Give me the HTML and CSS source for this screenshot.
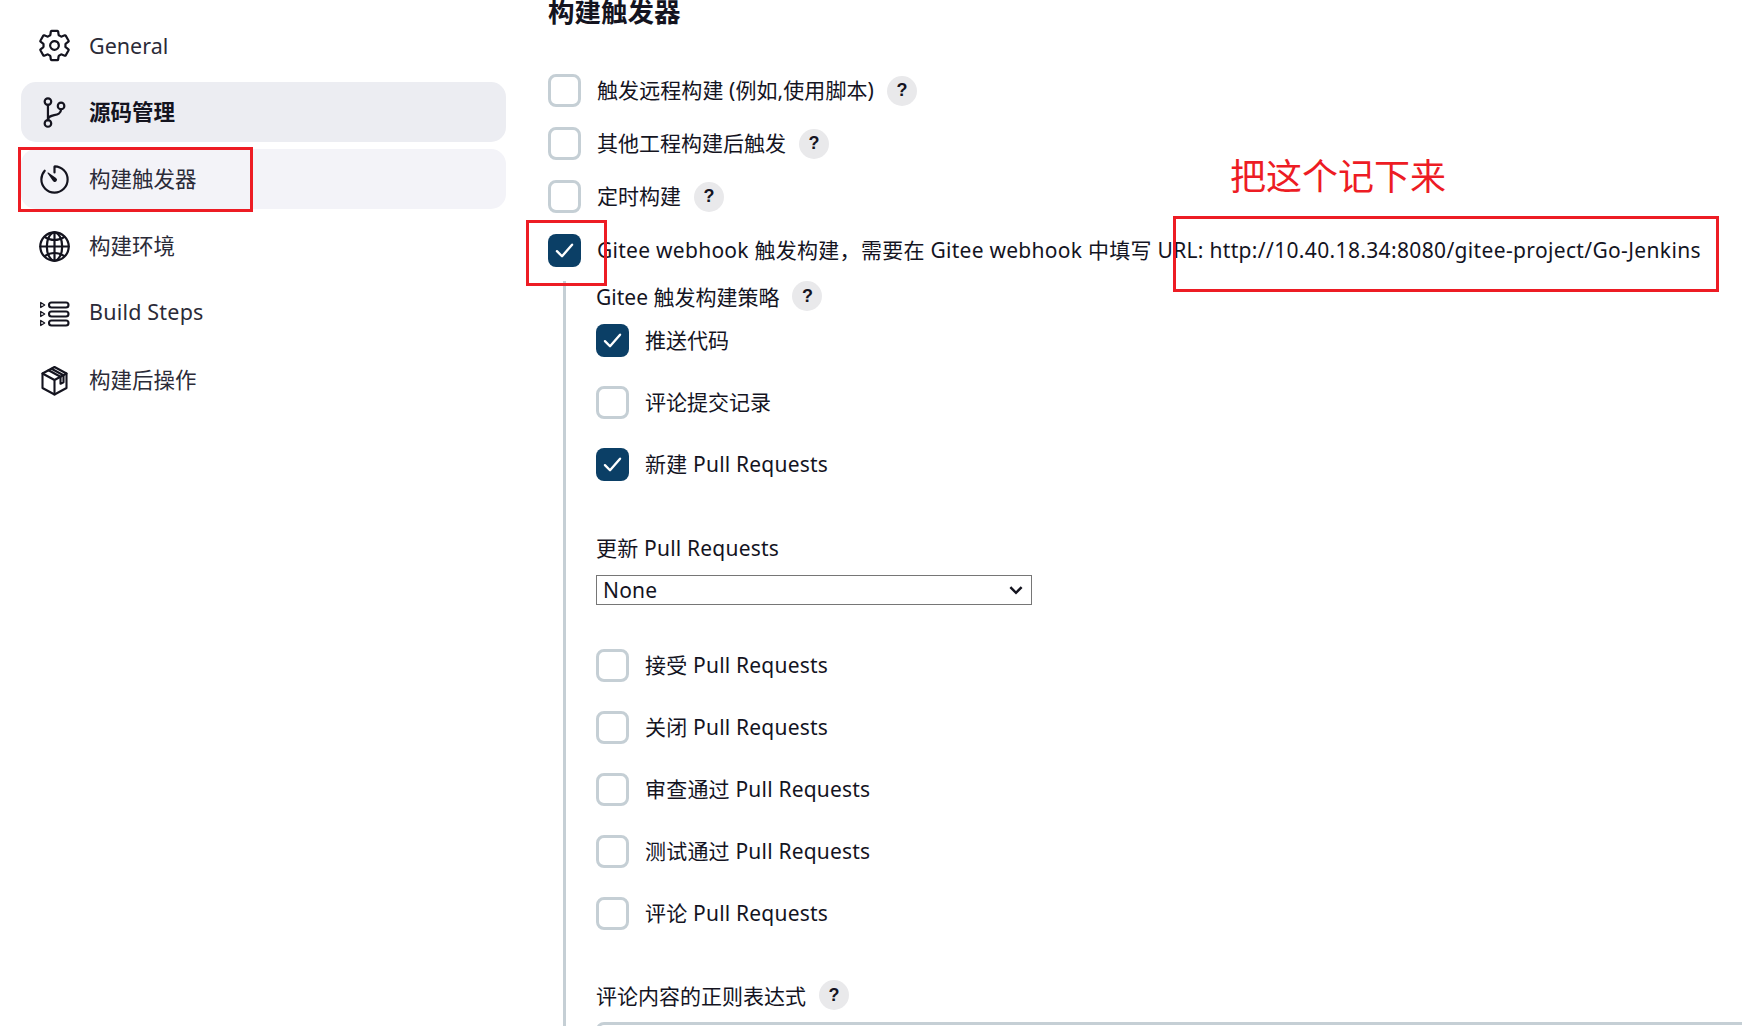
FILE: index.html
```html
<!DOCTYPE html>
<html lang="zh-CN">
<head>
  <meta charset="UTF-8" />
  <title>配置</title>
  <link rel="stylesheet" href="styles.css">
</head>
<body>
<div class="page">

  <nav class="sidebar">
    <a class="nav-item">
      <svg class="nav-icon" viewBox="0 0 512 512"><path d="M262.29 192.31a64 64 0 1057.4 57.4 64.13 64.13 0 00-57.4-57.4zM416.39 256a154.34 154.34 0 01-1.53 20.79l45.21 35.46a10.81 10.81 0 012.45 13.75l-42.77 74a10.81 10.81 0 01-13.14 4.59l-44.9-18.08a16.11 16.11 0 00-15.17 1.75A164.48 164.48 0 01325 400.8a15.94 15.94 0 00-8.82 12.14l-6.73 47.89a11.08 11.08 0 01-10.68 9.17h-85.54a11.11 11.11 0 01-10.69-8.87l-6.72-47.82a16.07 16.07 0 00-9-12.22 155.3 155.3 0 01-21.46-12.57 16 16 0 00-15.11-1.71l-44.89 18.07a10.81 10.81 0 01-13.14-4.58l-42.77-74a10.8 10.8 0 012.45-13.75l38.21-30a16.05 16.05 0 006-14.08c-.36-4.17-.58-8.33-.58-12.5s.21-8.27.58-12.35a16 16 0 00-6.07-13.94l-38.19-30A10.81 10.81 0 0149.48 186l42.77-74a10.81 10.81 0 0113.14-4.59l44.9 18.08a16.11 16.11 0 0015.17-1.75A164.48 164.48 0 01187 111.2a15.94 15.94 0 008.82-12.14l6.73-47.89A11.08 11.08 0 01213.23 42h85.54a11.11 11.11 0 0110.69 8.87l6.72 47.82a16.07 16.07 0 009 12.22 155.3 155.3 0 0121.46 12.57 16 16 0 0015.11 1.71l44.89-18.07a10.81 10.81 0 0113.14 4.58l42.77 74a10.8 10.8 0 01-2.45 13.75l-38.21 30a16.05 16.05 0 00-6.05 14.08c.33 4.14.55 8.3.55 12.47z"/></svg>
      <span>General</span>
    </a>
    <a class="nav-item active">
      <svg class="nav-icon" viewBox="0 0 512 512"><circle cx="160" cy="96" r="48"/><circle cx="160" cy="416" r="48"/><path d="M160 368V144"/><circle cx="352" cy="160" r="48"/><path d="M352 208c0 128-192 48-192 160"/></svg>
      <span class="zh">源码管理</span>
    </a>
    <a class="nav-item hover">
      <svg class="nav-icon" viewBox="0 0 512 512"><path d="M112.91 128A191.85 191.85 0 0064 254c-1.18 106.35 85.65 193.8 192 194 106.2.2 192-85.83 192-192 0-104.54-83.55-189.61-187.5-192a4.36 4.36 0 00-4.5 4.37V152"/><path class="solid" d="M233.38 278.63l-79-113a8.13 8.13 0 0111.32-11.32l113 79a32.5 32.5 0 01-37.25 53.26 33.21 33.21 0 01-8.07-7.94z"/></svg>
      <span class="zh">构建触发器</span>
    </a>
    <a class="nav-item">
      <svg class="nav-icon" viewBox="0 0 512 512"><path d="M256 48C141.13 48 48 141.13 48 256s93.13 208 208 208 208-93.13 208-208S370.87 48 256 48z"/><path d="M256 48c-58.07 0-112.67 93.13-112.67 208S197.93 464 256 464s112.67-93.13 112.67-208S314.07 48 256 48z"/><path d="M117.33 117.33c38.24 27.15 86.38 43.34 138.67 43.34s100.43-16.19 138.67-43.34M394.67 394.67c-38.24-27.15-86.38-43.34-138.67-43.34s-100.43 16.19-138.67 43.34"/><path d="M256 48v416M464 256H48"/></svg>
      <span class="zh">构建环境</span>
    </a>
    <a class="nav-item">
      <svg class="nav-icon" viewBox="-3 -3 35 35"><g class="hair"><path d="M.7 3.500l4 2.500-4 2.500zM.7 12.500l4 2.500-4 2.500zM.7 21.500l4 2.500-4 2.500z"/></g><g class="thin"><rect x="9" y="3.500" width="19.500" height="5" rx="2.500"/><rect x="9" y="12.500" width="19.500" height="5" rx="2.500"/><rect x="9" y="21.500" width="19.500" height="5" rx="2.500"/></g></svg>
      <span class="zh wide">Build Steps</span>
    </a>
    <a class="nav-item">
      <svg class="nav-icon" viewBox="-3 -3 35 35"><g class="thin"><path d="M14.500 1L26.500 7.500V22L14.500 28.500 2.500 22V7.500z"/><path d="M2.500 7.500L14.500 14 26.500 7.500M14.500 14v14.500"/><path d="M8.500 4.300L20.500 10.700v7l3-1.500v-7L11.500 2.800"/></g></svg>
      <span class="zh">构建后操作</span>
    </a>
  </nav>

  <main class="content">
    <h2 class="section-title">构建触发器</h2>

    <div class="row"><span class="check"></span><span class="label first-label">触发远程构建 (例如,使用脚本)</span><span class="help">?</span></div>
    <div class="row"><span class="check"></span><span class="label">其他工程构建后触发</span><span class="help">?</span></div>
    <div class="row row-third"><span class="check"></span><span class="label">定时构建</span><span class="help">?</span></div>
    <div class="row row-last">
      <span class="check checked"><svg viewBox="0 0 24 24"><path d="M6.500 12.500l3.700 3.700 7.300-8.400"/></svg></span>
      <span class="label webhook">Gitee webhook 触发构建，需要在 Gitee webhook 中填写 URL: <span class="url">http://10.40.18.34:8080/gitee-project/Go-Jenkins</span></span>
    </div>

    <div class="nested">
      <div class="field-title first">Gitee 触发构建策略<span class="help">?</span></div>

      <div class="opt"><span class="check checked"><svg viewBox="0 0 24 24"><path d="M6.500 12.500l3.700 3.700 7.300-8.400"/></svg></span><span class="label">推送代码</span></div>
      <div class="opt"><span class="check"></span><span class="label">评论提交记录</span></div>
      <div class="opt"><span class="check checked"><svg viewBox="0 0 24 24"><path d="M6.500 12.500l3.700 3.700 7.300-8.400"/></svg></span><span class="label en">新建 Pull Requests</span></div>

      <div class="field-title en">更新 Pull Requests</div>
      <div class="select en">None<svg viewBox="0 0 16 16"><path d="M3 5.500l5 5 5-5"/></svg></div>

      <div class="opt"><span class="check"></span><span class="label en">接受 Pull Requests</span></div>
      <div class="opt"><span class="check"></span><span class="label en">关闭 Pull Requests</span></div>
      <div class="opt"><span class="check"></span><span class="label en">审查通过 Pull Requests</span></div>
      <div class="opt"><span class="check"></span><span class="label en">测试通过 Pull Requests</span></div>
      <div class="opt"><span class="check"></span><span class="label en">评论 Pull Requests</span></div>

      <div class="field-title regex">评论内容的正则表达式<span class="help">?</span></div>
      <div class="textbox"></div>
    </div>
  </main>

  <!-- red marks drawn over the screenshot -->
  <div class="mark mark-nav"></div>
  <div class="mark mark-check"></div>
  <div class="mark mark-url"></div>
  <div class="note">把这个记下来</div>
</div>
</body>
</html>
```

FILE: styles.css
```css
* {
  box-sizing: border-box;
}
html, body {
  margin: 0;
  padding: 0;
  background: #fff;
}
body {
  font-family: "Noto Sans", "Noto Sans CJK SC", sans-serif;
  color: #14141f;
  font-size: 21px;
}
.page {
  position: relative;
  display: flex;
  width: 1742px;
  height: 1026px;
  overflow: hidden;
}

/* sidebar */
.sidebar {
  width: 548px;
  padding: 15px 0 0 21px;
  flex-shrink: 0;
}
.nav-item {
  display: flex;
  align-items: center;
  gap: 17px;
  width: 485px;
  height: 60px;
  margin-bottom: 7px;
  padding-left: 16px;
  border-radius: 15px;
  font-size: 21.500px;
  color: #2b2b38;
}
.nav-item .zh {
  padding-bottom: 3px;
}
.nav-item .wide {
  letter-spacing: .2px;
}
.nav-item.active {
  background: #ecedf2;
  font-weight: 700;
  color: #14141f;
}
.nav-item.hover {
  background: #f3f3f8;
}
.nav-icon {
  width: 35px;
  height: 35px;
  flex-shrink: 0;
  fill: none;
  stroke: #14141f;
  stroke-width: 32;
  stroke-linecap: round;
  stroke-linejoin: round;
}
.nav-icon .solid {
  fill: #14141f;
  stroke: none;
}
.nav-icon .thin {
  stroke-width: 2.100;
}
.nav-icon .hair {
  stroke-width: 1.300;
}

/* main column */
.content {
  flex: 1;
  min-width: 0;
}
.section-title {
  margin: 0 0 48px;
  height: 26px;
  line-height: 24px;
  font-size: 26.500px;
  font-weight: 700;
}
.row {
  display: flex;
  align-items: center;
  height: 33px;
  margin-bottom: 20px;
  white-space: nowrap;
}
.row-third {
  margin-bottom: 21px;
}
.row-last {
  margin-bottom: 14px;
}
.check {
  display: block;
  width: 33px;
  height: 33px;
  flex-shrink: 0;
  border: 3px solid #c5cfd5;
  border-radius: 8px;
  background: #fff;
}
.check.checked {
  border: none;
  background: #0b3f66;
}
.check svg {
  display: block;
  width: 33px;
  height: 33px;
  fill: none;
  stroke: #fff;
  stroke-width: 1.700;
  stroke-linecap: round;
  stroke-linejoin: round;
}
.label {
  margin-left: 16px;
  padding-bottom: 3px;
}
.first-label {
  letter-spacing: .08px;
}
.en {
  letter-spacing: .2px;
}
.webhook {
  letter-spacing: .27px;
}
.url {
  letter-spacing: .35px;
}
.help {
  display: inline-flex;
  align-items: center;
  justify-content: center;
  width: 30px;
  height: 30px;
  margin-left: 13px;
  flex-shrink: 0;
  border-radius: 50%;
  background: #e9e9eb;
  font-family: "Liberation Sans", sans-serif;
  font-size: 18px;
  font-weight: 700;
  letter-spacing: 0;
}

/* gitee options */
.nested {
  margin-left: 15px;
  padding-left: 30px;
  height: 760px;
  border-left: 3px solid #c5cfd5;
}
.field-title {
  display: flex;
  align-items: center;
  height: 30px;
  white-space: nowrap;
}
.field-title.first {
  margin-bottom: 13px;
}
.opt {
  display: flex;
  align-items: center;
  height: 33px;
  margin-bottom: 29px;
}
.opt + .field-title {
  margin-top: 51px;
}
.opt + .field-title.regex {
  margin-top: 50px;
}
.select {
  display: flex;
  align-items: center;
  justify-content: space-between;
  width: 436px;
  height: 30px;
  margin: 13px 0 44px;
  padding: 0 6px;
  border: 1px solid #767676;
  background: #fff;
}
.select svg {
  width: 18px;
  height: 18px;
  fill: none;
  stroke: #14141f;
  stroke-width: 2.200;
}
.textbox {
  width: 1200px;
  height: 40px;
  margin-top: 12px;
  border: 3px solid #c5cfd5;
  border-radius: 8px;
}

/* annotations */
.mark {
  position: absolute;
  border: 3px solid #ed1c24;
}
.mark-nav {
  left: 18px;
  top: 147px;
  width: 235px;
  height: 65px;
}
.mark-check {
  left: 526px;
  top: 220px;
  width: 81px;
  height: 66px;
}
.mark-url {
  left: 1173px;
  top: 216px;
  width: 546px;
  height: 76px;
}
.note {
  position: absolute;
  left: 1230px;
  top: 152px;
  font-size: 36px;
  line-height: 50px;
  color: #ed1c24;
}
```
